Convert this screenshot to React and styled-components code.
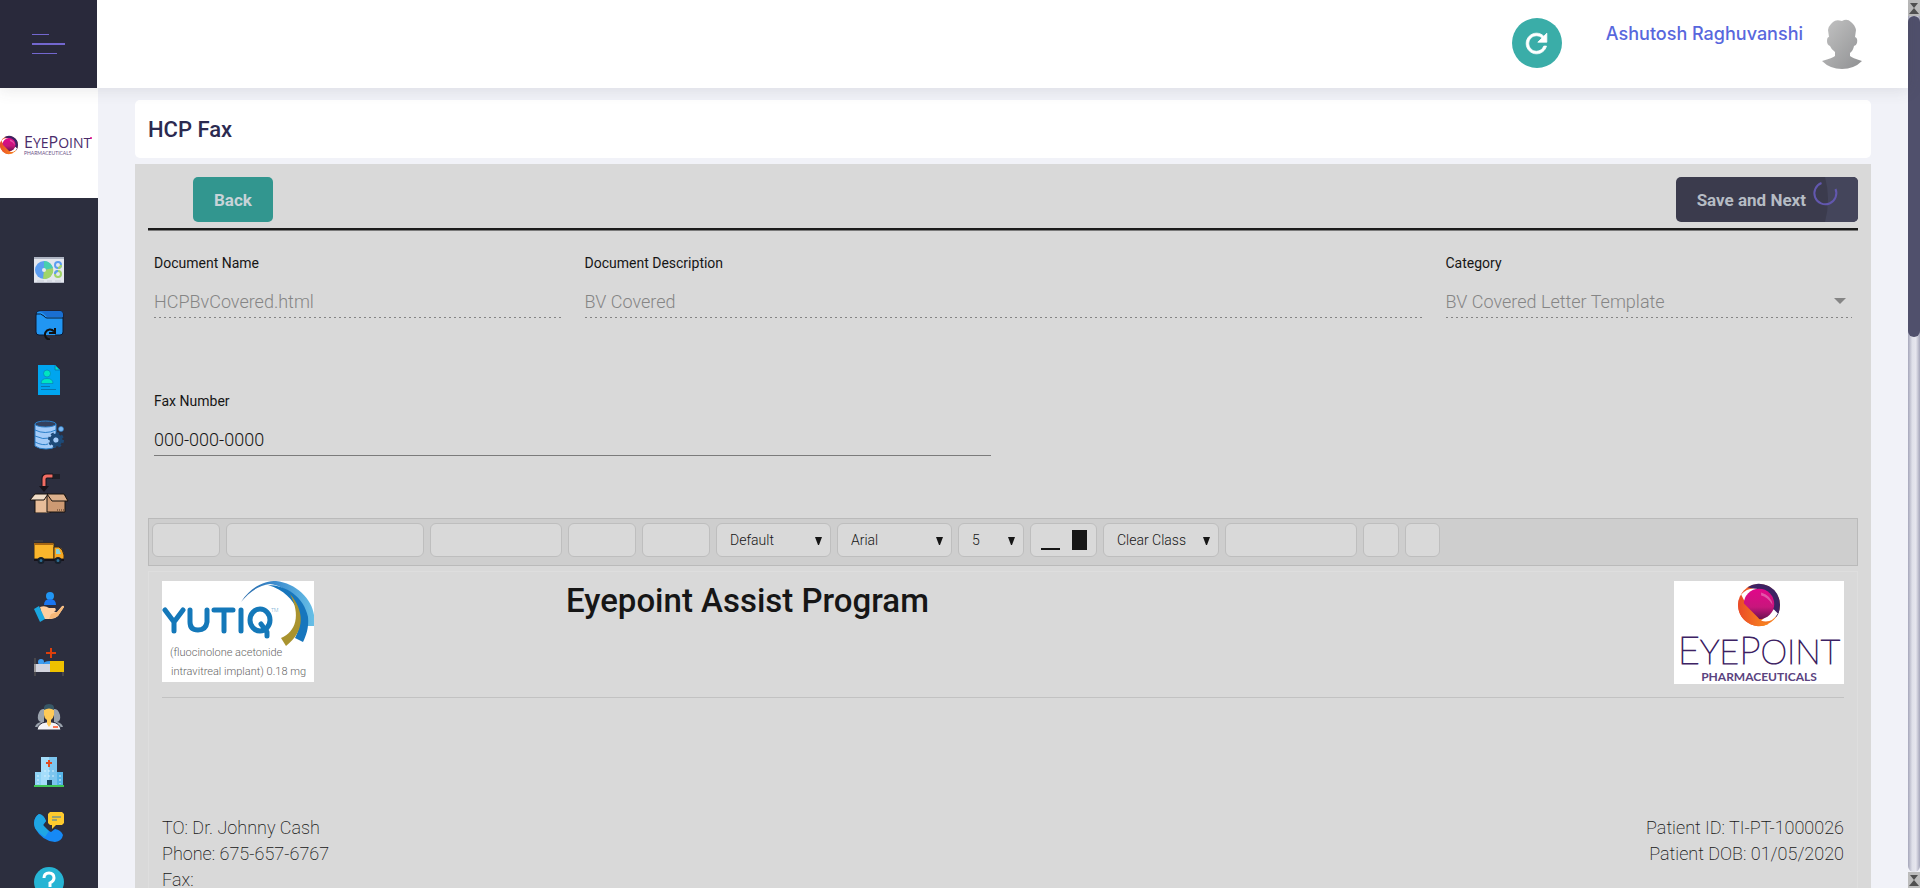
import React from 'react';
import styled, { createGlobalStyle } from 'styled-components';

const GlobalStyle = createGlobalStyle`
  * { box-sizing: border-box; }
  body {
    margin: 0;
    background: #f1f2f8;
    font-family: Roboto, 'Liberation Sans', sans-serif;
    font-weight: 300;
    color: #161616;
  }
  button, input, select { font-family: inherit; }
`;

const Shell = styled.div`
  display: flex;
  height: 100vh;
  overflow: hidden;
`;

const Page = styled.div`
  flex: 1;
  min-width: 0;
  display: flex;
  flex-direction: column;
`;

const Header = styled.header`
  position: relative;
  z-index: 2;
  display: flex;
  flex: none;
  height: 88px;
  background: #fff;
  box-shadow: 0 1px 15px 1px rgba(69, 65, 78, 0.12);
`;

const MenuButton = styled.button`
  width: 97px;
  padding: 0 0 0 32px;
  border: 0;
  background: #29293b;
  display: flex;
  flex-direction: column;
  justify-content: center;
  gap: 8px;
`;

const MenuLine = styled.span`
  width: ${(p) => p.$width}px;
  height: ${(p) => p.$height || 1}px;
  background: #7367cf;
`;

const HeaderTools = styled.div`
  flex: 1;
  display: flex;
  justify-content: flex-end;
  align-items: flex-start;
  padding: 18px 46px 0 0;
`;

const RefreshButton = styled.button`
  width: 50px;
  height: 50px;
  padding: 0;
  border: 0;
  border-radius: 50%;
  background: #3aada8;
  display: grid;
  place-items: center;
  margin-right: 44px;
`;

const UserLink = styled.a`
  font: 500 18px/32px Inter, sans-serif;
  color: #5867dd;
  text-decoration: none;
  margin-right: 19px;
`;

const Body = styled.div`
  flex: 1;
  min-height: 0;
  display: flex;
`;

const Sidebar = styled.aside`
  width: 98px;
  flex: none;
  background: #2c2e3e;
  overflow: hidden;
`;

const SideLogo = styled.div`
  height: 110px;
  background: #fff;
  display: flex;
  align-items: center;
`;

const SideNav = styled.nav`
  padding-top: 44px;
`;

const SideLink = styled.a`
  display: grid;
  place-items: center;
  height: ${(p) => (p.$tall ? 62 : 55)}px;
`;

const Main = styled.main`
  flex: 1;
  min-width: 0;
  padding: 12px 37px;
  overflow-y: auto;
  scrollbar-width: none;
`;

const TitleCard = styled.div`
  height: 58px;
  padding: 2px 13px 0;
  border-radius: 5px;
  background: #fff;
  display: flex;
  align-items: center;
  margin-bottom: 6px;
`;

const Title = styled.h1`
  margin: 0;
  font-size: 22px;
  line-height: 28px;
  font-weight: 500;
  color: #2b2a50;
`;

const Panel = styled.section`
  background: #d9d9d9;
  padding: 13px;
`;

const Actions = styled.div`
  display: flex;
  justify-content: space-between;
  padding: 0 0 6px 45px;
  border-bottom: 2px solid #1b1b1b;
  box-shadow: 0 1px 0 #7a7a7a;
`;

const ActionButton = styled.button`
  position: relative;
  height: 45px;
  border: 0;
  border-radius: 5px;
  padding: 0 ${(p) => (p.$busy ? 52 : 21)}px 0 21px;
  overflow: hidden;
  background: ${(p) => (p.$busy ? '#3b3b4d' : '#32968f')};
  color: ${(p) => (p.$busy ? '#b6bcc4' : '#c8d3d8')};
  font-size: 17px;
  line-height: 24px;
  font-weight: 700;
`;

const BusyMark = styled.svg`
  position: absolute;
  right: 0;
  top: 0;
`;

const Fields = styled.div`
  display: grid;
  grid-template-columns: repeat(4, 1fr);
  column-gap: 24px;
  row-gap: 73px;
  padding: 23px 6px 62px;
`;

const Field = styled.div`
  grid-column: span ${(p) => p.$span || 1};
  display: flex;
  flex-direction: column;
  gap: 12px;
`;

const FieldLabel = styled.label`
  font-size: 14px;
  line-height: 20px;
  font-weight: 400;
`;

const dotted = `
  border: 0;
  color: #858585;
  opacity: 1;
  background: repeating-linear-gradient(to right, #858585 0 2px, transparent 2px 5px) left bottom / 100% 1px no-repeat;
`;

const TextInput = styled.input`
  width: 100%;
  height: 33px;
  padding: 0;
  border: 0;
  border-bottom: 1px solid #7b7b7b;
  border-radius: 0;
  outline: 0;
  background: transparent;
  font-size: 18px;
  font-weight: 300;
  color: #161616;
  &:disabled { ${dotted} }
`;

const SelectWrap = styled.div`
  position: relative;
  svg { position: absolute; right: 6px; top: 13px; pointer-events: none; }
`;

const FieldSelect = styled.select`
  appearance: none;
  display: block;
  width: 100%;
  height: 33px;
  padding: 0;
  font-size: 18px;
  font-weight: 300;
  ${dotted}
`;

const Toolbar = styled.div`
  display: flex;
  gap: 6px;
  height: 48px;
  padding: 4px 3px;
  border: 1px solid #bababa;
  background: #cecece;
`;

const ToolGroup = styled.div`
  position: relative;
  flex: none;
  width: ${(p) => p.$width}px;
  height: 34px;
  border: 1px solid #bebebe;
  border-radius: 6px;
  background: #d9d9d9;
  svg { position: absolute; right: 8px; top: 13px; pointer-events: none; }
`;

const ToolSelect = styled.select`
  appearance: none;
  width: 100%;
  height: 32px;
  padding: 0 13px;
  border: 0;
  background: transparent;
  font-size: 14px;
  font-weight: 300;
  color: #161616;
`;

const Swatches = styled(ToolGroup)`
  display: flex;
  align-items: flex-end;
  gap: 12px;
  padding: 0 0 6px 10px;
`;

const Swatch = styled.button`
  width: ${(p) => p.$width}px;
  height: ${(p) => p.$height}px;
  padding: 0;
  border: 0;
  background: #161616;
`;

const Letter = styled.article`
  margin-top: 5px;
  border: 1px solid #dedede;
  padding: 9px 13px 60px;
  font-size: 18px;
  line-height: 26px;
  font-weight: 200;
`;

const LetterHead = styled.header`
  display: grid;
  grid-template-columns: 404px 1fr auto;
  align-items: start;
  height: 117px;
  border-bottom: 1px solid #c2c2c2;
`;

const LetterTitle = styled.h2`
  margin: 0;
  font-size: 33px;
  line-height: 40px;
  font-weight: 500;
`;

const Addresses = styled.div`
  display: flex;
  justify-content: space-between;
  padding-top: 117px;
`;

const Lines = styled.div`
  display: flex;
  flex-direction: column;
  text-align: ${(p) => p.$align || 'left'};
`;

const Scroller = styled.div`
  flex: none;
  width: 12px;
  display: flex;
  flex-direction: column;
`;

const ScrollCap = styled.div`
  height: 16px;
  background: #bcbcbc;
  display: grid;
  place-items: center;
`;

const ScrollTrack = styled.div`
  flex: 1;
  border-radius: 0 0 6px 6px;
  background: linear-gradient(to right, #a5a6ba, #dfe0e9 35%, #e6e6ee 65%, #a5a6ba);
`;

const ScrollThumb = styled.div`
  height: 37.5%;
  border-radius: 6px;
  background: #50506c;
`;

const CapIcon = () => (
  <svg width="10" height="12" viewBox="0 0 10 12" fill="#505050">
    <path d="M1 1h8L5 6zM5 6l5 6H0z" />
  </svg>
);

const Orb = ({ cx, cy, r }) => (
  <g transform={`translate(${cx} ${cy}) scale(${r / 20})`}>
    <circle r="20" fill="url(#orbRing)" />
    <path d="M-11-17A20 20 0 0 1 20 0Q20 8 16 12L12 4Q10-13-11-17z" fill="#3d2263" />
    <path d="M-17-10Q-10-18 0-15L-14-4zM18 8Q12 18 2 15L14 4z" fill="#fff" />
    <circle cy="-1" r="14.500" fill="url(#orbCore)" />
    <path d="M-19-6A20 20 0 0 0 9 18Q3 18-1 12L-17-4z" fill="url(#orbRing)" />
    <path d="M2-12Q12-9 13 0Q8-8 2-9z" fill="#fff" opacity=".3" />
  </g>
);

const SmallLogo = () => (
  <svg width="98" height="40" viewBox="0 0 98 40" role="img" aria-label="EyePoint Pharmaceuticals">
    <defs>
      <linearGradient id="orbRing" x1="0" x2="1"><stop stopColor="#ea4b28" /><stop offset="1" stopColor="#f98a1f" /></linearGradient>
      <linearGradient id="orbCore" x1="0" x2="0" y1="0" y2="1"><stop stopColor="#e2068a" /><stop offset=".6" stopColor="#c8167c" /><stop offset="1" stopColor="#6b1150" /></linearGradient>
    </defs>
    <Orb cx={9} cy={22} r={9} />
    <text x="24" y="25" fontFamily="'Open Sans'" fontWeight="400" fontSize="16" fill="#4a2c6b">
      E<tspan fontSize="14">YE</tspan>P<tspan fontSize="14">OINT</tspan>
    </text>
    <circle cx="91" cy="15" r="1" fill="#e2068a" />
    <text x="24" y="32" fontFamily="Lato" fontSize="5" fontWeight="400" fill="#6b5286">PHARMACEUTICALS</text>
  </svg>
);

const EyePointLogo = () => (
  <svg width="170" height="103" viewBox="0 0 170 103" role="img" aria-label="EyePoint Pharmaceuticals">
    <path d="M0 0h170v103H0z" fill="#fff" />
    <Orb cx={85} cy={24} r={21} />
    <text x="85" y="83" textAnchor="middle" fontFamily="Lato" fontSize="38" fill="#3d2263" stroke="#3d2263" strokeWidth="1">
      E<tspan fontSize="34">YE</tspan>P<tspan fontSize="34">OINT</tspan>
    </text>
    <text x="85" y="100" textAnchor="middle" fontFamily="Lato" fontSize="12" fontWeight="700" fill="#5a4380">PHARMACEUTICALS</text>
  </svg>
);

const YutiqLogo = () => (
  <svg width="152" height="101" viewBox="0 0 152 101" role="img" aria-label="Yutiq">
    <defs>
      <linearGradient id="arc" x1="0" x2="1"><stop stopColor="#2467a8" /><stop offset=".5" stopColor="#3f8fd0" /><stop offset="1" stopColor="#67bfe6" /></linearGradient>
    </defs>
    <path d="M0 0h152v101H0z" fill="#fff" />
    <path d="M79 21C90 4 104 0 114 0C134 2 150 18 152 34V45H143C140 22 124 4 108 3C97 4 87 11 79 21z" fill="url(#arc)" />
    <path d="M106 4C124 4 142 16 146 36C147 47 144 55 141 61L133 57C142 42 138 14 106 4z" fill="#1776bd" />
    <path d="M128 13C142 29 144 50 124 65L119 57C134 51 139 34 128 13z" fill="#a9932f" />
    <g fill="none" stroke="#1478b9" strokeWidth="5" strokeLinecap="round" strokeLinejoin="round">
      <path d="M3 29l9 12 9-12M12 41v9M28 29v12q0 8 8 8t9-8V29M52 29h19M62 29v21M79 29v21" />
      <ellipse cx="98" cy="39" rx="10" ry="11" /><path d="M99 43l6 8v4" />
    </g>
    <text x="109" y="31" fontFamily="Roboto" fontSize="5" fill="#1478b9">TM</text>
    <g fontFamily="Roboto" fontSize="11" fontWeight="300" fill="#666">
      <text x="8" y="75">(fluocinolone acetonide</text>
      <text x="9" y="94">intravitreal implant) 0.18 mg</text>
    </g>
  </svg>
);

const Avatar = () => (
  <svg width="40" height="52" viewBox="0 0 40 52" role="img" aria-label="User">
    <defs><linearGradient id="av" x1="0" y1="0" x2="1" y2="1"><stop stopColor="#c4c4c4" /><stop offset="1" stopColor="#8f9092" /></linearGradient></defs>
    <path d="M9 6L11 4Q14 1 20 3Q25 0 29 4Q33 7 34 12L33 19Q36 20 35 25Q34 28 32 28Q31 33 28 35V38Q30 40 40 43Q32 51 20 51Q8 51 0 43Q11 40 13 38V34Q9 31 8 28Q5 27 5 23Q5 19 7 19L6 12Q6 9 9 6z" fill="url(#av)" />
  </svg>
);

const Caret = () => (
  <svg width="7" height="8" viewBox="0 0 7 8"><path d="M0 0h7L4 8H3z" fill="#161616" /></svg>
);

const Icon = ({ children, size = 30 }) => (
  <svg width={size} height={size} viewBox={`0 0 ${size} ${size}`} aria-hidden="true">{children}</svg>
);

const navItems = [
  { label: 'Dashboard', art: (
    <Icon>
      <path d="M0 2h30v26H0z" fill="#e4e7ee" /><path d="M0 2h30v2H0z" fill="#aeb4c2" /><path d="M0 27h30v1H0z" fill="#b8bcc8" />
      <circle cx="10" cy="15" r="9" fill="#5c9df0" /><path d="M10 15V6a9 9 0 0 1 9 7z" fill="#48cfad" /><path d="M10 15l9-2a9 9 0 0 1-10 11z" fill="#a0d468" /><circle cx="10" cy="15" r="2" fill="#e4e7ee" />
      <g fill="none" strokeWidth="2"><circle cx="24" cy="10" r="3" stroke="#5c9df0" /><path d="M24 13a3 3 0 0 0 3-3" stroke="#a0d468" /><circle cx="24" cy="19" r="3" stroke="#a0d468" /><path d="M21 19a3 3 0 0 1 3-3" stroke="#5c9df0" /></g>
      <path d="M3 26h7M13 26h5M21 26h6" stroke="#c9ced8" />
    </Icon>) },
  { label: 'Documents', art: (
    <Icon>
      <path d="M2 6q0-5 3-5h21q3 0 3 3v18q0 3-3 3H5q-3 0-3-3z" fill="#2196f3" stroke="#0c1a33" />
      <path d="M4 1h22q3 0 3 4v2H13L9 3z" fill="#1a6fd1" /><path d="M2 4q5-1 8 2 1 2 3 2h16" fill="none" stroke="#0c1a33" />
      <path d="M11 21h10v5H11z" fill="#2196f3" /><path d="M10 25h11v5H10z" fill="#2c2e3e" /><path d="M16 29.500a5 5 0 1 1 4-8M21 18v5h-6" fill="none" stroke="#111" strokeWidth="2" />
    </Icon>) },
  { label: 'Patient file', art: (
    <Icon>
      <path d="M4 0h17l5 5v25H4z" fill="#00a5ef" /><path d="M21 0l5 5h-5z" fill="#00e5c0" stroke="#087fb8" />
      <circle cx="13" cy="8.500" r="3.500" fill="#00e5c0" stroke="#087fb8" strokeWidth=".7" /><path d="M7 18.500q0-5 6-5t6 5z" fill="#00e5c0" stroke="#087fb8" strokeWidth=".7" /><path d="M7 21.500h9M7 24.500h15" stroke="#0777af" />
    </Icon>) },
  { label: 'Master data', art: (
    <Icon>
      <path d="M1 4v22q4 3 11 3t10-3V4z" fill="#a4cbf8" stroke="#2b7fc9" /><ellipse cx="11.500" cy="4" rx="10.500" ry="3" fill="#33405c" stroke="#2b7fc9" />
      <path d="M1 10q10 5 21 0M1 16q8 4 15 2M1 22q8 4 13 2" fill="none" stroke="#2b7fc9" /><circle cx="27" cy="9" r="2.500" fill="#79b7f2" stroke="#2b7fc9" strokeWidth=".6" />
      <circle cx="22" cy="20" r="4.500" fill="none" stroke="#1d4a78" strokeWidth="4" /><circle cx="22" cy="20" r="7" fill="none" stroke="#1d4a78" strokeWidth="2" strokeDasharray="3 2.500" /><circle cx="22" cy="20" r="2.500" fill="#a4cbf8" />
    </Icon>) },
  { label: 'Inventory', tall: true, art: (
    <Icon size={40}>
      <path d="M15 16V5q0-2 3-2h6" fill="none" stroke="#17131a" strokeWidth="5" /><path d="M15 15V6q0-3 3-3h6" fill="none" stroke="#f26d63" strokeWidth="3" />
      <path d="M10 13h10l-5 6z" fill="#17131a" /><path d="M24 1v5M26 1v5M28 1v5M30 1v5" stroke="#111" />
      <path d="M6 22h15v18H6z" fill="#e8bd99" stroke="#19130f" /><path d="M18 22h18v17H18z" fill="#cd9a73" stroke="#19130f" />
      <path d="M6 21h13l-4 6H1z" fill="#f1ddc7" stroke="#19130f" /><path d="M18 21h17l4 7H23z" fill="#dcb08c" stroke="#19130f" /><path d="M28 37h7" stroke="#4a3020" strokeDasharray="1 1" />
    </Icon>) },
  { label: 'Shipments', art: (
    <Icon>
      <path d="M0 4h9" stroke="#4b4844" />
      <path d="M0 6h20v16H0z" fill="#fbb62c" stroke="#3a2a14" /><path d="M20 10h5q4 2 5 8v4H20z" fill="#f7a823" stroke="#3a2a14" /><path d="M22 12h3l2 5h-5z" fill="#87d3dd" />
      <path d="M0 6h19v2H0z" fill="#a76713" /><path d="M0 23h30" stroke="#17131a" strokeWidth="2" /><circle cx="7" cy="23.500" r="2.500" fill="#2c6f96" stroke="#17202b" strokeWidth="2" /><circle cx="24" cy="23.500" r="2.500" fill="#2c6f96" stroke="#17202b" strokeWidth="2" />
    </Icon>) },
  { label: 'Patient care', art: (
    <Icon>
      <circle cx="16" cy="4" r="4" fill="#2196f3" /><path d="M10 13q0-6 6-6t6 6z" fill="#1976f2" />
      <path d="M6 15q5-2 9 1h6q2 2-1 4h3l5-6q2-1 2 1l-6 9q-3 3-7 3H9z" fill="#ffcf9f" /><path d="M17 22l6-2 6-6 1 1-6 9q-4 3-9 3z" fill="#f6b878" />
      <path d="M0 17l5-3 6 13-5 3z" fill="#1aa7e0" />
    </Icon>) },
  { label: 'Beds', art: (
    <Icon>
      <path d="M17 1v10M12 6h10" stroke="#dd3f0b" strokeWidth="2" /><circle cx="7" cy="15" r="3" fill="#3c9cf0" /><path d="M9 18q0-4 7-4v4z" fill="#3c9cf0" />
      <path d="M0 17h16v8H0z" fill="#d3d4de" /><path d="M16 14h14v11H16z" fill="#efc100" /><path d="M1 11v18M29 25v4" stroke="#625f58" />
    </Icon>) },
  { label: 'Users', art: (
    <Icon>
      <path d="M1 25q1-4 6-5-4-1-3-7 2-7 6-6v18zM29 25q-1-4-6-5 4-1 3-7-2-7-6-6v18z" fill="#9ba3ad" />
      <path d="M3 28q1-7 9-8h6q8 1 9 8z" fill="#f3f3f6" stroke="#2c2e3e" /><path d="M10 6q5-6 10 0v7q-1 4-3 5v4l-2 3-2-3v-4q-3-2-3-5z" fill="#ffca57" />
      <path d="M10 8q-1-6 5-6t5 6q-5-3-10 0z" fill="#375766" /><path d="M19 25h5" stroke="#ff7654" strokeWidth="2" />
    </Icon>) },
  { label: 'Hospitals', art: (
    <Icon>
      <path d="M1 15h28v14H1z" fill="#56b5e8" /><path d="M1 15h7v14H1z" fill="#8fd3f5" /><path d="M7 0h16v29H7z" fill="#a5ddfa" /><path d="M15 0h8v29h-8z" fill="#7cc5ee" />
      <path d="M15 3v7M12 6h6" stroke="#e04b20" strokeWidth="2" /><path d="M10 14h11M10 19h11M4 18v9M26 18v9" stroke="#d6effc" strokeWidth="1" strokeDasharray="2 2" /><path d="M13 23h5v6h-5z" fill="#18455f" /><path d="M0 28h30v2H0z" fill="#3fc556" />
    </Icon>) },
  { label: 'Calls', art: (
    <Icon>
      <path d="M5 2q5 1 7 7l-3 4q3 5 8 7l4-3q6 1 8 6-1 6-8 7Q8 29 1 16-2 7 5 2z" fill="#1689f5" /><path d="M5 2q5 1 7 7l-3 4 6 6-4 6Q3 20 1 16-2 7 5 2z" fill="#1fa6e3" />
      <path d="M16 0h12l2 2v9l-2 2h-6l-4 4v-4h-2l-2-2V2z" fill="#ffcb2e" /><path d="M18 5h9M18 8h5" stroke="#367ab4" />
    </Icon>) },
  { label: 'Help', art: (
    <Icon>
      <circle cx="15" cy="15" r="15" fill="#26b4d4" /><path d="M10 11q0-5 5-5t5 5q0 3-4 5v4" fill="none" stroke="#fff" strokeWidth="3" /><circle cx="16" cy="24" r="2" fill="#fff" />
    </Icon>) },
];

const ToolPick = ({ label, value, width }) => (
  <ToolGroup $width={width}>
    <ToolSelect aria-label={label} defaultValue={value}><option>{value}</option></ToolSelect>
    <Caret />
  </ToolGroup>
);

export default function App() {
  return (
    <Shell>
      <GlobalStyle />
      <Page>
        <Header>
          <MenuButton aria-label="Toggle menu">
            <MenuLine $width={17} />
            <MenuLine $width={33} $height={2} />
            <MenuLine $width={25} />
          </MenuButton>
          <HeaderTools>
            <RefreshButton aria-label="Refresh">
              <svg width="31" height="31" viewBox="0 0 24 24" fill="#fff" stroke="#fff" strokeWidth=".6">
                <path d="M17.650 6.350C16.200 4.900 14.210 4 12 4c-4.420 0-7.990 3.580-7.990 8s3.570 8 7.990 8c3.730 0 6.840-2.550 7.730-6h-2.080c-.82 2.330-3.040 4-5.650 4-3.310 0-6-2.690-6-6s2.690-6 6-6c1.660 0 3.140.69 4.220 1.780L13 11h7V4l-2.350 2.350z" />
              </svg>
            </RefreshButton>
            <UserLink href="#profile">Ashutosh Raghuvanshi</UserLink>
            <Avatar />
          </HeaderTools>
        </Header>
        <Body>
          <Sidebar>
            <SideLogo><SmallLogo /></SideLogo>
            <SideNav>
              {navItems.map((n) => (
                <SideLink key={n.label} href="#" aria-label={n.label} $tall={n.tall}>{n.art}</SideLink>
              ))}
            </SideNav>
          </Sidebar>
          <Main>
            <TitleCard><Title>HCP Fax</Title></TitleCard>
            <Panel>
              <Actions>
                <ActionButton>Back</ActionButton>
                <ActionButton $busy>
                  Save and Next
                  <BusyMark width="46" height="45" viewBox="0 0 46 45">
                    <path d="M13 0Q19 22 13 45H46V0z" fill="#44455b" />
                    <path d="M23.500 12A11 11 0 1 1 9.500 6" fill="none" stroke="#6257ae" strokeWidth="2" />
                  </BusyMark>
                </ActionButton>
              </Actions>
              <Fields>
                <Field>
                  <FieldLabel htmlFor="docName">Document Name</FieldLabel>
                  <TextInput id="docName" disabled defaultValue="HCPBvCovered.html" />
                </Field>
                <Field $span={2}>
                  <FieldLabel htmlFor="docDesc">Document Description</FieldLabel>
                  <TextInput id="docDesc" disabled defaultValue="BV Covered" />
                </Field>
                <Field>
                  <FieldLabel htmlFor="category">Category</FieldLabel>
                  <SelectWrap>
                    <FieldSelect id="category" disabled><option>BV Covered Letter Template</option></FieldSelect>
                    <svg width="12" height="6" viewBox="0 0 12 6"><path d="M0 0h12L6 6z" fill="#858585" /></svg>
                  </SelectWrap>
                </Field>
                <Field $span={2}>
                  <FieldLabel htmlFor="fax">Fax Number</FieldLabel>
                  <TextInput id="fax" defaultValue="000-000-0000" />
                </Field>
              </Fields>
              <Toolbar role="toolbar" aria-label="Editor">
                <ToolGroup $width={68} />
                <ToolGroup $width={198} />
                <ToolGroup $width={132} />
                <ToolGroup $width={68} />
                <ToolGroup $width={68} />
                <ToolPick label="Paragraph style" value="Default" width={115} />
                <ToolPick label="Font" value="Arial" width={115} />
                <ToolPick label="Font size" value="5" width={66} />
                <Swatches $width={67}>
                  <Swatch aria-label="Text color" $width={19} $height={2} />
                  <Swatch aria-label="Background color" $width={15} $height={20} />
                </Swatches>
                <ToolPick label="Custom class" value="Clear Class" width={116} />
                <ToolGroup $width={132} />
                <ToolGroup $width={36} />
                <ToolGroup $width={35} />
              </Toolbar>
              <Letter>
                <LetterHead>
                  <YutiqLogo />
                  <LetterTitle>Eyepoint Assist Program</LetterTitle>
                  <EyePointLogo />
                </LetterHead>
                <Addresses>
                  <Lines>
                    <span>TO: Dr. Johnny Cash</span>
                    <span>Phone: 675-657-6767</span>
                    <span>Fax:</span>
                  </Lines>
                  <Lines $align="right">
                    <span>Patient ID: TI-PT-1000026</span>
                    <span>Patient DOB: 01/05/2020</span>
                  </Lines>
                </Addresses>
              </Letter>
            </Panel>
          </Main>
        </Body>
      </Page>
      <Scroller aria-hidden="true">
        <ScrollCap><CapIcon /></ScrollCap>
        <ScrollTrack><ScrollThumb /></ScrollTrack>
        <ScrollCap><CapIcon /></ScrollCap>
      </Scroller>
    </Shell>
  );
}
